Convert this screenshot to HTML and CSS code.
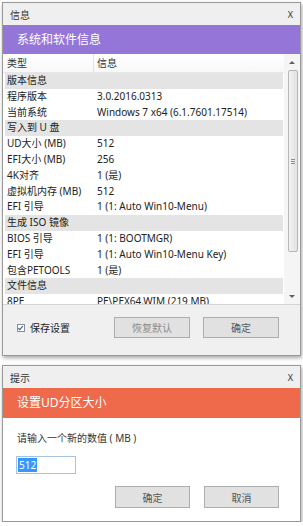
FILE: index.html
```html
<!DOCTYPE html>
<html lang="zh-CN">
<head>
    <meta charset="UTF-8">
    <meta name="viewport" content="width=device-width, initial-scale=1.0">
    <title>信息</title>
    <link rel="stylesheet" href="styles.css">
</head>
<body>
    <div class="desk">
        <!-- 系统和软件信息 -->
        <div class="window">
            <div class="titlebar">
                <span>信息</span>
                <span class="close">X</span>
            </div>
            <div class="banner banner-purple">系统和软件信息</div>

            <div class="list">
                <div class="rows">
                    <div class="row head"><span class="col-type">类型</span><span class="col-info">信息</span></div>
                    <div class="row group">版本信息</div>
                    <div class="row"><span class="col-type">程序版本</span><span class="col-info">3.0.2016.0313</span></div>
                    <div class="row"><span class="col-type">当前系统</span><span class="col-info">Windows 7 x64 (6.1.7601.17514)</span></div>
                    <div class="row group">写入到 U 盘</div>
                    <div class="row"><span class="col-type">UD大小 (MB)</span><span class="col-info">512</span></div>
                    <div class="row"><span class="col-type">EFI大小 (MB)</span><span class="col-info">256</span></div>
                    <div class="row"><span class="col-type">4K对齐</span><span class="col-info">1 (是)</span></div>
                    <div class="row"><span class="col-type">虚拟机内存 (MB)</span><span class="col-info">512</span></div>
                    <div class="row"><span class="col-type">EFI 引导</span><span class="col-info">1 (1: Auto Win10-Menu)</span></div>
                    <div class="row group">生成 ISO 镜像</div>
                    <div class="row"><span class="col-type">BIOS 引导</span><span class="col-info">1 (1: BOOTMGR)</span></div>
                    <div class="row"><span class="col-type">EFI 引导</span><span class="col-info">1 (1: Auto Win10-Menu Key)</span></div>
                    <div class="row"><span class="col-type">包含PETOOLS</span><span class="col-info">1 (是)</span></div>
                    <div class="row group">文件信息</div>
                    <div class="row"><span class="col-type">8PE</span><span class="col-info">PE\PEX64.WIM (219 MB)</span></div>
                </div>
                <div class="scrollbar">
                    <div class="arrow"><span class="tri-up"></span></div>
                    <div class="track">
                        <div class="thumb"><i></i><i></i><i></i></div>
                    </div>
                    <div class="arrow"><span class="tri-down"></span></div>
                </div>
            </div>

            <div class="footer">
                <label class="check">
                    <span class="box">
                        <svg width="8" height="8" viewBox="0 0 8 8"><path d="M1.5 4.2 L3.2 6 L6.6 1.8" fill="none" stroke="#2a55a8" stroke-width="1.3"/></svg>
                    </span>
                    保存设置
                </label>
                <button class="btn btn-muted first">恢复默认</button>
                <button class="btn">确定</button>
            </div>
        </div>

        <!-- 提示 -->
        <div class="window">
            <div class="titlebar">
                <span>提示</span>
                <span class="close">X</span>
            </div>
            <div class="banner banner-orange">设置UD分区大小</div>
            <div class="prompt-body">
                <div class="prompt">请输入一个新的数值 ( MB )</div>
                <div class="field"><span class="selected">512</span></div>
                <div class="actions">
                    <button class="btn tall">确定</button>
                    <button class="btn tall">取消</button>
                </div>
            </div>
        </div>
    </div>
</body>
</html>
```

FILE: styles.css
```css
/* Reset */
* {
    margin: 0;
    padding: 0;
    box-sizing: border-box;
}

body {
    font-family: "Noto Sans", "Noto Sans CJK SC", sans-serif;
    font-size: 10px;
    color: #222;
    background: #fff;
}

.desk {
    display: flex;
    flex-direction: column;
    gap: 9px;
    padding: 2px 0 0 2px;
}

/* Window frame */
.window {
    width: 299px;
    border: 1px solid #9a9a9a;
    background: #f0f0f0;
    box-shadow: 1px 2px 4px rgba(0, 0, 0, 0.35);
}

.titlebar {
    height: 22px;
    display: flex;
    justify-content: space-between;
    align-items: center;
    padding: 0 7px;
    background: #efefef;
    color: #333;
    font-size: 10px;
}

.close {
    font-size: 9px;
}

.banner {
    color: #fff;
    font-size: 12px;
    padding-left: 14px;
}

.banner-purple {
    height: 29px;
    line-height: 29px;
    background: #9476d9;
}

.banner-orange {
    height: 30px;
    line-height: 30px;
    background: #ee6a4b;
}

/* Info list */
.list {
    height: 251px;
    display: flex;
    background: #fff;
    border-bottom: 1px solid #d4d4d4;
}

.rows {
    flex: 1;
    overflow: hidden;
    padding-left: 2px;
}

.row {
    display: flex;
    height: 15.8px;
    line-height: 15.8px;
    white-space: nowrap;
}

.col-type {
    width: 92px;
    padding-left: 2px;
}

.row.head {
    height: 19px;
    line-height: 18px;
    margin-left: -2px;
    padding-left: 2px;
    border-bottom: 1px solid #e6e6e6;
    background: linear-gradient(#fff, #f8f8f8);
    color: #333;
}

.head .col-type {
    width: 89px;
    border-right: 1px solid #e2e2e2;
}

.head .col-info {
    padding-left: 3px;
}

.row.group {
    background: #e4e4e4;
    padding-left: 2px;
    margin-right: 1px;
}

/* Scrollbar */
.scrollbar {
    width: 16px;
    display: flex;
    flex-direction: column;
    background: #f5f5f5;
}

.arrow {
    height: 16px;
    display: flex;
    justify-content: center;
    align-items: center;
}

.tri-up,
.tri-down {
    border-left: 3px solid transparent;
    border-right: 3px solid transparent;
}

.tri-up {
    border-bottom: 3px solid #606060;
}

.tri-down {
    border-top: 3px solid #606060;
}

.track {
    flex: 1;
    padding: 0 2px 0 4px;
}

.thumb {
    height: 182px;
    border: 1px solid #b7b7b7;
    border-radius: 2px;
    background: linear-gradient(90deg, #f2f2f2, #e2e2e2);
    display: flex;
    flex-direction: column;
    justify-content: center;
    align-items: center;
    gap: 1px;
}

.thumb i {
    width: 4px;
    height: 1px;
    background: #8d8d8d;
}

/* Footer */
.footer {
    height: 50px;
    display: flex;
    align-items: flex-start;
    padding: 12px 21px 0 14px;
}

.check {
    height: 21px;
    display: flex;
    align-items: center;
    gap: 5px;
    color: #222;
}

.box {
    width: 8px;
    height: 8px;
    border: 1px solid #8e8f8f;
    background: #fff;
    display: flex;
}

.box svg {
    margin: -1px 0 0 -1px;
}

.btn {
    width: 76px;
    height: 21px;
    border: 1px solid #adadad;
    background: #e1e1e1;
    font-family: inherit;
    font-size: 10px;
    color: #555;
}

.btn + .btn {
    margin-left: 13px;
}

.btn.first {
    margin-left: auto;
}

.btn-muted {
    color: #8a8a8a;
}

.btn.tall {
    width: 75px;
    height: 22px;
}

/* Prompt dialog */
.prompt-body {
    height: 103px;
    background: #fff;
    padding: 13px 21px 0 13px;
}

.prompt {
    padding-left: 1px;
    line-height: 14px;
    color: #333;
}

.field {
    width: 60px;
    height: 18px;
    margin-top: 11px;
    border: 1px solid #a6c4e2;
    padding: 1px 0 0 1px;
}

.selected {
    display: inline-block;
    height: 14px;
    line-height: 14px;
    padding: 0 1px;
    background: #3399ff;
    color: #fff;
}

.actions {
    display: flex;
    justify-content: flex-end;
    gap: 14px;
    margin-top: 12px;
}

.actions .btn + .btn {
    margin-left: 0;
}
```
